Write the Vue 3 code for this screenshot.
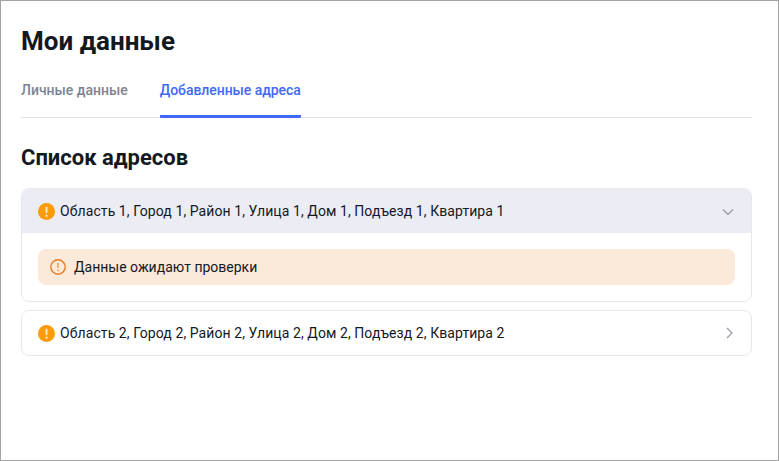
<script setup>
const addresses = [
  { id: 1, text: 'Область 1, Город 1, Район 1, Улица 1, Дом 1, Подъезд 1, Квартира 1', open: true },
  { id: 2, text: 'Область 2, Город 2, Район 2, Улица 2, Дом 2, Подъезд 2, Квартира 2', open: false }
]
</script>

<template>
  <div class="frame">
    <h1 class="title">Мои данные</h1>
    <nav class="tabs">
      <span class="tab">Личные данные</span>
      <span class="tab active">Добавленные адреса</span>
    </nav>
    <h2 class="subtitle">Список адресов</h2>
    <div class="list">
      <section v-for="a in addresses" :key="a.id" class="card">
        <header class="head" :class="{ open: a.open }">
          <svg class="warn" width="17" height="17" viewBox="0 0 16 16">
            <circle cx="8" cy="8" r="8" fill="#fb9b05" />
            <rect x="7" y="3.2" width="2" height="6.4" rx="1" fill="#fbe3bd" />
            <circle cx="8" cy="12" r="1.1" fill="#fbe3bd" />
          </svg>
          <span class="addr">{{ a.text }}</span>
          <svg class="chev" width="16" height="16" viewBox="0 0 16 16" fill="none" stroke="#8f95a3" stroke-width="1.1">
            <path v-if="a.open" d="M2 6.5l5 5 5-5" />
            <path v-else d="M6 3l5 5-5 5" />
          </svg>
        </header>
        <div v-if="a.open" class="body">
          <div class="notice">
            <svg width="16" height="16" viewBox="0 0 16 16">
              <circle cx="8" cy="8" r="7.2" fill="none" stroke="#e67e22" stroke-width="1.4" />
              <rect x="7.2" y="3.8" width="1.6" height="5.4" rx="0.8" fill="#ee9f66" />
              <circle cx="8" cy="11.3" r="0.9" fill="#ee9f66" />
            </svg>
            <span>Данные ожидают проверки</span>
          </div>
        </div>
      </section>
    </div>
  </div>
</template>

<style>
html, body { margin: 0; background: #fff; }
</style>

<style scoped>
.frame {
  box-sizing: border-box;
  width: 779px;
  height: 461px;
  border: 1px solid #a3a3a3;
  padding: 20px 26px 0 20px;
  font-family: Roboto, "Liberation Sans", sans-serif;
  color: #14181f;
  background: #fff;
  overflow: hidden;
}
.title {
  margin: 0;
  font-size: 26px;
  line-height: 40px;
  font-weight: 700;
}
.tabs {
  display: flex;
  gap: 32px;
  margin-top: 8px;
  border-bottom: 1px solid #dfe0ea;
}
.tab {
  font-size: 14px;
  font-weight: 500;
  line-height: 20px;
  padding: 11px 0 17px;
  color: #7d8490;
  margin-bottom: -1px;
}
.tab.active {
  color: #4268fb;
  border-bottom: 3px solid #4268fb;
  padding-bottom: 15px;
  border-radius: 1px;
  letter-spacing: -0.05px;
}
.subtitle {
  margin: 26px 0 0;
  font-size: 22px;
  line-height: 28px;
  font-weight: 700;
}
.list {
  display: flex;
  flex-direction: column;
  gap: 8px;
  margin-top: 16px;
}
.card {
  border: 1px solid #e8e8ea;
  border-radius: 8px;
  overflow: hidden;
}
.head {
  display: flex;
  align-items: center;
  height: 44px;
  padding: 0 16px;
  font-size: 14px;
}
.head.open { background: #ebecf4; }
.warn { flex: none; margin-right: 5px; }
.addr { flex: 1; letter-spacing: 0.08px; }
.chev { flex: none; margin-right: -2px; }
.body { padding: 16px; }
.notice {
  display: flex;
  align-items: center;
  gap: 8px;
  height: 36px;
  padding: 0 12px;
  border-radius: 8px;
  background: #fbe9da;
  font-size: 14px;
}
</style>
